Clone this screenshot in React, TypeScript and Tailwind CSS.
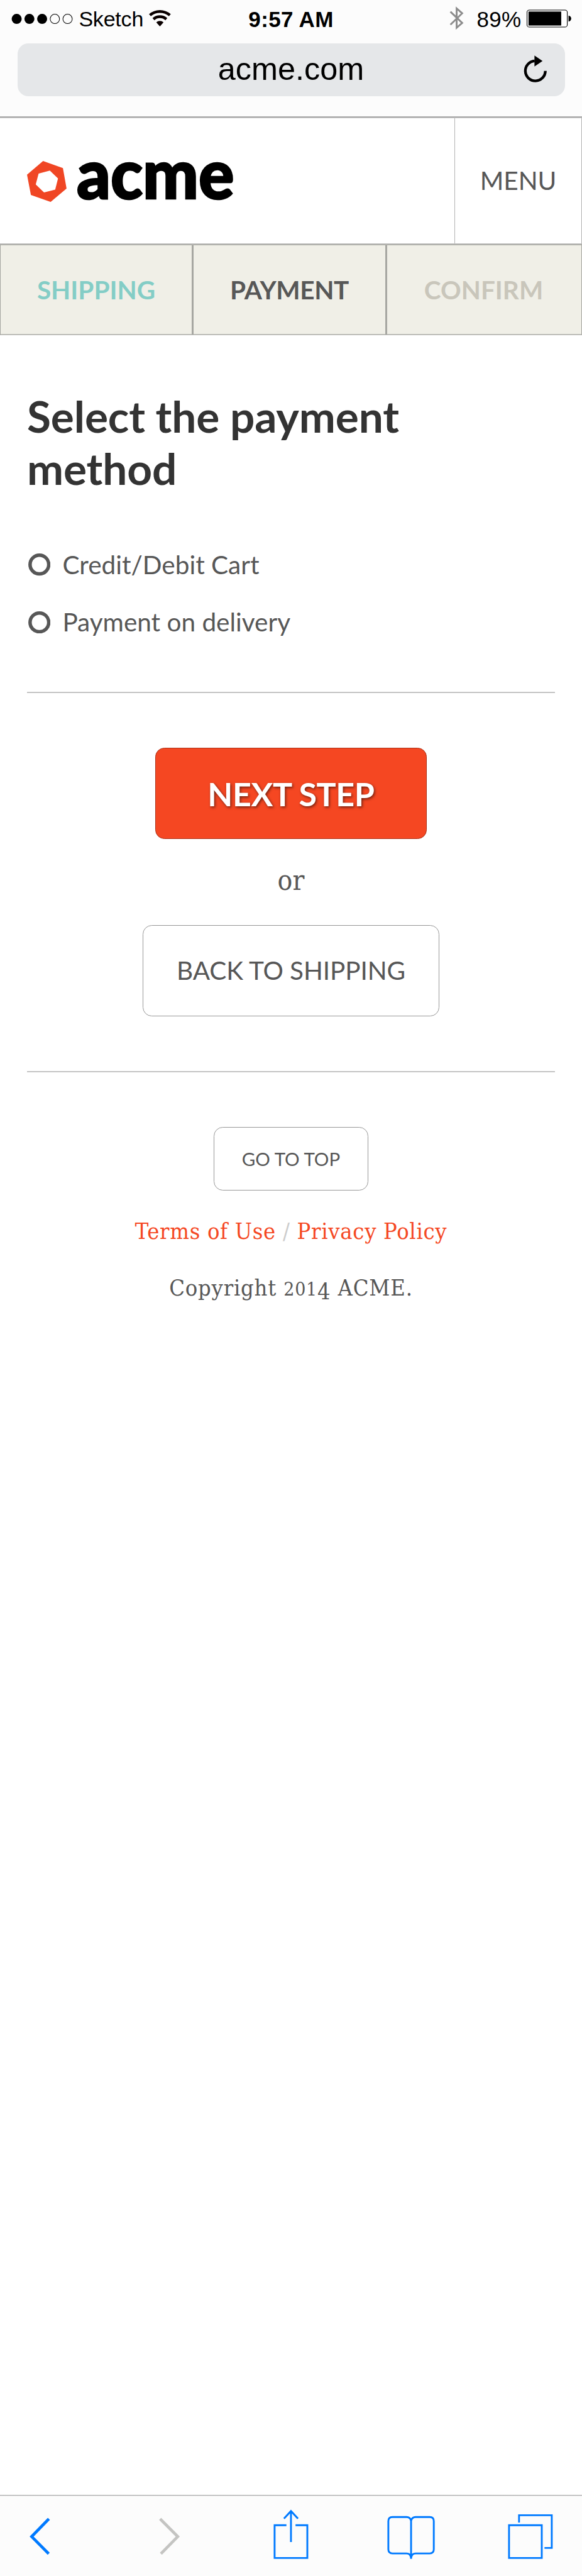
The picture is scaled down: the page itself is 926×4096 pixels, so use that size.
import React from "react";

function StatusBar() {
  return (
    <div className="grid h-[69.4px] grid-cols-[1fr_auto_1fr] px-[16px] font-['Liberation_Sans',sans-serif] text-[35px] leading-[61.6px] text-black">
      <div className="flex h-[61.6px] items-center pl-[2.2px]">
        <svg className="mt-[-1.4px] h-[18.1px] w-[99.8px] shrink-0" viewBox="25.2 29.2 138 25">
          <circle cx="37" cy="41.7" r="11" />
          <circle cx="65" cy="41.7" r="11" />
          <circle cx="93" cy="41.7" r="11" />
          <circle cx="121" cy="41.7" r="10.3" fill="none" stroke="#000" strokeWidth="1.4" />
          <circle cx="149" cy="41.7" r="10.3" fill="none" stroke="#000" strokeWidth="1.4" />
        </svg>
        <span className="ml-[7.4px] w-[111.7px] shrink-0 text-[34px] tracking-[-0.2px]">Sketch</span>
        <svg className="mt-[-3.4px] h-[27.5px] w-[34.8px] shrink-0" viewBox="327.8 21 48 38" fill="none" stroke="#0a0000">
          <path d="M329.9 33.7 A33 33 0 0 1 373.7 33.7" strokeWidth="6.2" />
          <path d="M337.6 42.4 A21.3 21.3 0 0 1 366 42.4" strokeWidth="6.2" />
          <path d="M351.8 58.3 L343.8 49.3 A12 12 0 0 1 359.8 49.3 Z" fill="#0a0000" stroke="none" />
        </svg>
      </div>
      <div className="font-bold tracking-[0.35px]">9:57 AM</div>
      <div className="flex h-[61.6px] items-center justify-end">
        <svg className="mt-[-3px] h-[39.8px] w-[23.1px]" viewBox="987 13 32 55" fill="none" stroke="#8c8c8c" strokeWidth="4">
          <path d="M989.3 26.3 L1015.2 51 L1003 61.5 V19.2 L1015.2 29.8 L989.3 54.8" />
        </svg>
        <span className="ml-[20px] w-[73px] tracking-[0.3px]">89%</span>
        <svg className="ml-[7px] mt-[-1.8px] h-[29px] w-[71.6px]" viewBox="1160 21.4 99 40">
          <rect x="1160.7" y="22.7" width="88.6" height="37.4" rx="5" fill="#fff" stroke="#000" strokeWidth="1.5" />
          <rect x="1164" y="26" width="72" height="30.7" />
          <path d="M1252 34.7 C1260 36 1260 47 1252 48 Z" />
        </svg>
      </div>
    </div>
  );
}

function AddressBar() {
  return (
    <div className="mx-[27.5px] grid h-[84px] grid-cols-[1fr_auto_1fr] items-center rounded-[17px] bg-[#e5e7e9]">
      <span />
      <span className="pb-[2px] font-['Liberation_Sans',sans-serif] text-[50.4px] leading-[60px] text-black">acme.com</span>
      <svg className="mr-[27.8px] mt-[-3.4px] h-[43.4px] w-[37.6px] justify-self-end" viewBox="1152 121.5 52 60">
        <path d="M1200 155.7 A22 22 0 1 1 1176.5 133.7" fill="none" stroke="#000" strokeWidth="6" />
        <path d="M1176 122 L1193.8 134 L1176 146 Z" />
      </svg>
    </div>
  );
}

function SiteHeader() {
  return (
    <header className="flex h-[200px] border-b border-[#c0c0c0] bg-white">
      <div className="flex flex-1 items-start pl-[43.4px]">
        <svg className="mt-[68.1px] h-[65.1px] w-[62.9px]" viewBox="60 354 87 90">
          <path
            fillRule="evenodd"
            fill="#f04624"
            d="M95.3 354 L139 369.5 L147 414.5 L112 444 L68.5 428.7 L60 384 Z M110.2 375 L85.5 381.5 L79.2 405.5 L97.4 423.3 L122 416.8 L128.2 392.5 Z"
          />
        </svg>
        <span className="mt-[26.2px] ml-[15.7px] origin-left scale-x-[0.968] font-['Lato',sans-serif] text-[109px] leading-[120px] font-black text-black [-webkit-text-stroke:2.6px_#000]">acme</span>
      </div>
      <div className="flex w-[203px] items-center justify-center border-x border-[#b4b4b4] font-['Lato',sans-serif] text-[40.5px] leading-none text-[#575757]">
        MENU
      </div>
    </header>
  );
}

function Steps() {
  return (
    <nav className="grid h-[145px] grid-cols-[307px_308px_1fr] border border-y-2 border-x-[#a5a5a0] border-t-[#b0b0ab] border-b-[#bcbcb8] bg-[#f0efe7] text-center font-['Lato',sans-serif] text-[40.5px] leading-[142px] font-bold">
      <div className="border-r-[3px] border-[#a7a7a2] text-[#84cdc6]">SHIPPING</div>
      <div className="border-r-[3px] border-[#a7a7a2] tracking-[-0.35px] text-[#575757]">PAYMENT</div>
      <div className="pr-[2px] text-[#c9c6bb]">CONFIRM</div>
    </nav>
  );
}

function Option({ label }: { label: string }) {
  return (
    <label className="flex h-[60px] items-center">
      <svg className="ml-[1.5px] h-[35.4px] w-[35.4px]" viewBox="0 0 49 49">
        <circle cx="24.5" cy="24.5" r="20.6" fill="#fff" stroke="#575757" strokeWidth="7.6" />
      </svg>
      <span className="ml-[19.5px] text-[40.5px] leading-none">{label}</span>
    </label>
  );
}

function Toolbar() {
  return (
    <div className="mt-auto flex h-[129px] border-t border-[#afafaf] bg-[#fcfcfc]">
      <div className="flex w-full border-t border-[#dcdcdc] pt-[25.5px]">
        <svg className="ml-[44.8px] h-[86.8px] w-[36.2px]" viewBox="62 5520 50 120" fill="none" stroke="#007aff" strokeWidth="6.4">
          <path d="M107.3 5534 L69.4 5573 L106.9 5610.8" />
        </svg>
        <svg className="ml-[170px] h-[86.8px] w-[36.2px]" viewBox="347 5520 50 120" fill="none" stroke="#c4c4c2" strokeWidth="6.4">
          <path d="M352.2 5534 L391 5573 L353.9 5610.8" />
        </svg>
        <svg className="ml-[146.8px] h-[86.8px] w-[57.9px] overflow-visible" viewBox="600 5520 80 120" fill="none" stroke="#007aff" strokeWidth="4">
          <path d="M630 5548 H604 V5620 H676 V5548 H650 M640 5518 V5585 M624.6 5533.6 L640 5516.8 L655.4 5533.6" />
        </svg>
        <svg className="ml-[123px] h-[86.8px] w-[78.1px]" viewBox="850 5520 108 120" fill="none" stroke="#007aff" strokeWidth="4">
          <path d="M904 5622 V5538 Q902 5530 894 5530 H863 Q854 5530 854 5539 V5601 Q854 5610 863 5610 H894 Q903 5610 904 5621 Q905 5610 914 5610 H945 Q954 5610 954 5601 V5539 Q954 5530 945 5530 H914 Q906 5530 904 5538" />
        </svg>
        <svg className="ml-[114.3px] h-[86.8px] w-[73.8px]" viewBox="1116 5520 102 120" fill="none" stroke="#007aff" strokeWidth="4">
          <path d="M1120 5548 H1192 V5620 H1120 Z M1142 5542 V5526 H1214 V5598 H1198" />
        </svg>
      </div>
    </div>
  );
}

export default function App() {
  return (
    <div className="flex h-[4096px] w-[926px] flex-col overflow-hidden bg-white font-['Lato',sans-serif] text-[#575757]">
      <div className="h-[187px] border-b-2 border-[#aaaaaa] bg-[#fcfcfc]">
        <StatusBar />
        <AddressBar />
      </div>
      <div className="h-px shrink-0 bg-[#c6c6c6]" />
      <SiteHeader />
      <Steps />
      <main className="flex flex-col px-[43px]">
        <h1 className="mt-[87px] w-[700px] text-[69.4px] leading-[83.3px] font-bold tracking-[-0.12px] text-[#333333]">
          Select the payment method
        </h1>
        <div className="mt-[81.6px] flex flex-col gap-[31.1px]">
          <Option label="Credit/Debit Cart" />
          <Option label="Payment on delivery" />
        </div>
        <div className="mt-[80.7px] h-[2px] bg-[#c4c4c4]" />
        <button className="mt-[87.4px] h-[144.7px] w-[432.6px] self-center rounded-[14.5px] border border-[#a93219] bg-[#f54722] text-[52px] leading-none font-bold tracking-[-0.4px] text-white [text-shadow:1.5px_1.5px_4px_rgba(0,0,0,0.55)]">
          NEXT STEP
        </button>
        <p className="mt-[35.9px] text-center font-['DejaVu_Serif_Condensed','DejaVu_Serif',serif] text-[44px] leading-[60px]">or</p>
        <button className="mt-[41.4px] h-[144.6px] w-[471.6px] self-center rounded-[14.5px] border border-[#979797] text-[40.5px] leading-none tracking-[-0.1px]">
          BACK TO SHIPPING
        </button>
        <div className="mt-[87px] h-[2px] bg-[#c4c4c4]" />
      </main>
      <footer className="flex flex-col items-center font-['DejaVu_Serif_Condensed','DejaVu_Serif',serif] text-[36px] leading-[60px]">
        <button className="mt-[87.5px] h-[101px] w-[246.2px] rounded-[14.5px] border border-[#979797] font-['Lato',sans-serif] text-[29.5px] leading-none">
          GO TO TOP
        </button>
        <p className="mt-[34.2px] tracking-[0.7px] text-[#cccccc]">
          <a className="text-[#f54722]">Terms of Use</a> / <a className="text-[#f54722]">Privacy Policy</a>
        </p>
        <p className="mt-[30px] h-[60px] tracking-[0.8px]">
          Copyright <span className="text-[30px]">201</span>
          <span className="inline-block translate-y-[5.6px] leading-none">4</span> ACME.
        </p>
      </footer>
      <Toolbar />
    </div>
  );
}
